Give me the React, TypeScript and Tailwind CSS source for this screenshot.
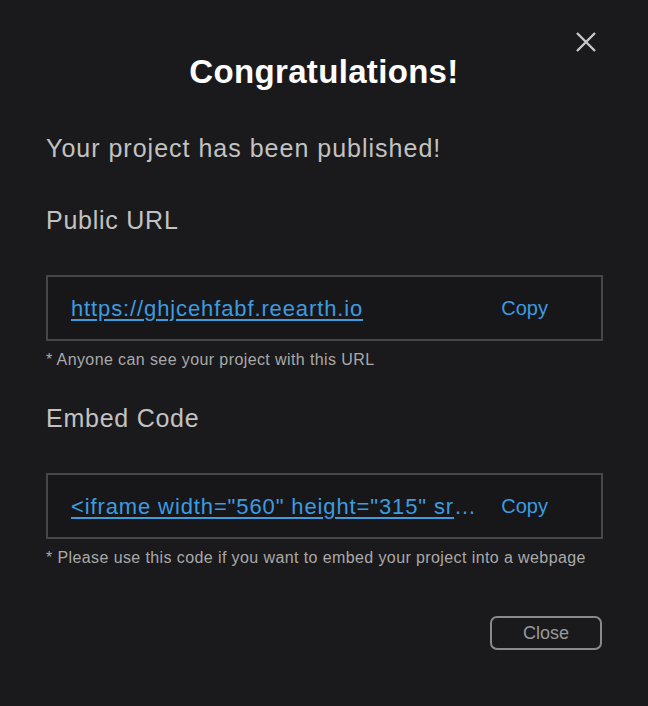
import React from 'react';

type FieldProps = {
  label: string;
  value: string;
  note: string;
};

function CopyField({ label, value, note }: FieldProps) {
  return (
    <div className="flex flex-col">
      <p className="text-[25px] leading-[30px] tracking-[0.03em] text-[#c2c2c2]">{label}</p>
      <div className="mt-[40px] flex h-[66px] items-center border-2 border-[#47474a] bg-[#171719] pl-[23px] pr-[53px]">
        <a
          href="#"
          className="min-w-0 flex-1 truncate text-[22px] tracking-[0.04em] text-[#3d9be0] underline underline-offset-[3px]"
        >
          {value}
        </a>
        <button className="ml-[20px] text-[20px] text-[#3d9be0]">Copy</button>
      </div>
      <p className="mt-[9px] text-[16px] leading-[20px] tracking-[0.025em] text-[#a9a9a9]">{note}</p>
    </div>
  );
}

export default function App() {
  return (
    <div
      className="relative h-[706px] w-[648px] bg-[#1a1a1c] px-[46px] pt-[52px]"
      style={{ fontFamily: '"Liberation Sans", Arial, sans-serif' }}
    >
      <button className="absolute right-[50px] top-[30px] text-[#c8c8c8]" aria-label="close">
        <svg width="24" height="24" viewBox="0 0 24 24" fill="none" stroke="currentColor" strokeWidth="2.4">
          <path d="M3 3 L21 21 M21 3 L3 21" />
        </svg>
      </button>
      <h1 className="text-center text-[33px] font-bold leading-[40px] tracking-[0.01em] text-white">
        Congratulations!
      </h1>
      <p className="mt-[41px] text-[25px] leading-[30px] tracking-[0.04em] text-[#c2c2c2]">
        Your project has been published!
      </p>
      <div className="mt-[42px] w-[557px]">
        <CopyField
          label="Public URL"
          value="https://ghjcehfabf.reearth.io"
          note="* Anyone can see your project with this URL"
        />
      </div>
      <div className="mt-[33px] w-[557px]">
        <CopyField
          label="Embed Code"
          value={'<iframe width="560" height="315" src="https://ghjcehfabf.reearth.io" frameborder="0"></iframe>'}
          note="* Please use this code if you want to embed your project into a webpage"
        />
      </div>
      <div className="mt-[48px] flex w-[556px] justify-end">
        <button className="h-[34px] w-[112px] rounded-[7px] border-2 border-[#8a8a8a] text-[18px] text-[#999999]">
          Close
        </button>
      </div>
    </div>
  );
}
